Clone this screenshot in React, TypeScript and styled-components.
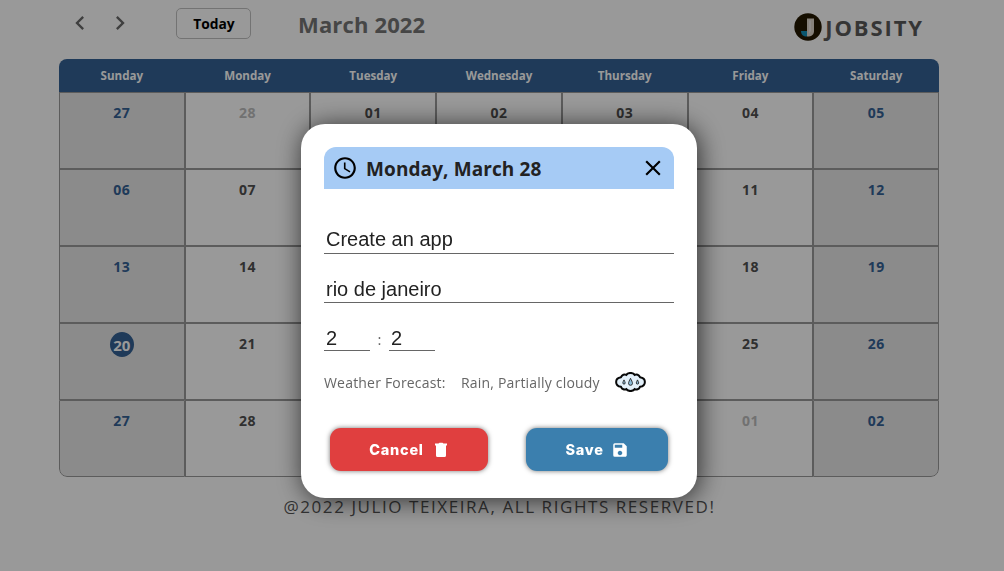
import React from "react";
import styled, { createGlobalStyle, css } from "styled-components";
import { MdAccessTime, MdChevronLeft, MdChevronRight, MdClose, MdSave } from "react-icons/md";

const GlobalStyle = createGlobalStyle`
  * { box-sizing: border-box; }
  body {
    margin: 0;
    background: #fff;
    color: #555;
    font-family: "Open Sans", "Noto Sans", sans-serif;
    overflow: hidden;
  }
  button, input { font-family: inherit; margin: 0; }
`;

const Page = styled.div`
  width: 1004px;
  height: 571px;
  padding: 0 65px 0 59px;
`;

const TopBar = styled.header`
  display: flex;
  align-items: center;
  height: 59px;
  padding: 0 16px 13px 8px;
`;

const NavButton = styled.button`
  display: flex;
  align-items: center;
  justify-content: center;
  width: 26px;
  height: 26px;
  margin-right: 14px;
  padding: 0;
  border: 0;
  background: none;
  color: #6a6a6a;
  font-size: 28px;
  svg { flex: none; }
`;

const TodayButton = styled.button`
  width: 75px;
  height: 31px;
  margin-left: 29px;
  padding: 0 0 0 1px;
  border: 1px solid #c0c0c0;
  border-radius: 5px;
  background: none;
  color: #000;
  font-size: 13.8px;
  font-weight: 700;
`;

const MonthTitle = styled.h1`
  margin: 1px 0 0 47px;
  color: #757575;
  font-size: 22px;
  line-height: 30px;
  font-weight: 700;
  letter-spacing: 0.15px;
  white-space: nowrap;
`;

const Brand = styled.div`
  display: flex;
  align-items: center;
  gap: 3px;
  margin: 8px -1px 0 auto;
  color: #595959;
  font-size: 22px;
  line-height: 30px;
  font-weight: 700;
  letter-spacing: 1.9px;
`;

const Calendar = styled.main`
  width: 880px;
`;

const Weekdays = styled.div`
  display: grid;
  grid-template-columns: repeat(7, 1fr);
  height: 33px;
  border-radius: 8px 8px 0 0;
  background: #346194;
  color: #fff;
  font-size: 11.6px;
  line-height: 33px;
  font-weight: 700;
  text-align: center;
`;

const Days = styled.div`
  display: grid;
  grid-template-columns: repeat(7, 1fr);
  grid-auto-rows: 77px;
  border-radius: 0 0 8px 8px;
  overflow: hidden;
`;

const Day = styled.div<{ $weekend: boolean; $corner?: "left" | "right" }>`
  display: flex;
  justify-content: center;
  align-items: flex-start;
  padding-top: 7px;
  border: 1px solid #999;
  background: ${(p) => (p.$weekend ? "#e8e8e8" : "#fff")};
  ${(p) => p.$corner && css`border-bottom-${p.$corner}-radius: 8px;`}
`;

const DayNumber = styled.span<{ $tone: string; $today: boolean }>`
  width: 24px;
  height: 25px;
  margin-top: ${(p) => (p.$today ? 1 : 0)}px;
  border-radius: 50%;
  background: ${(p) => (p.$today ? "#346194" : "transparent")};
  color: ${(p) => p.$tone};
  font-size: ${(p) => (p.$today ? 15 : 14)}px;
  line-height: ${(p) => (p.$today ? 26 : 25)}px;
  font-weight: 700;
  text-align: center;
  letter-spacing: ${(p) => (p.$today ? 0 : 0.5)}px;
`;

const Footer = styled.footer`
  margin-top: 17px;
  padding-left: 1px;
  color: #555;
  font-size: 17px;
  line-height: 26px;
  letter-spacing: 1.57px;
  text-align: center;
  white-space: nowrap;
`;

const Overlay = styled.div`
  position: fixed;
  inset: 0;
  padding: 124px 0 0 301px;
  background: rgba(0, 0, 0, 0.4);
`;

const Dialog = styled.section`
  width: 396px;
  height: 374px;
  padding: 23px;
  border-radius: 24px;
  background: #fff;
  box-shadow: 2px 2px 26px rgba(0, 0, 0, 0.72);
`;

const DialogHeader = styled.div`
  display: flex;
  align-items: center;
  height: 42px;
  padding: 0 8px;
  border-radius: 12px 12px 0 0;
  background: #a6cbf5;
  color: #000;
`;

const DialogTitle = styled.h2`
  flex: 1;
  margin: 2px 0 0 8px;
  color: #222;
  font-size: 19px;
  line-height: 28px;
  font-weight: 700;
  letter-spacing: 0.1px;
  white-space: nowrap;
`;

const CloseButton = styled.button`
  display: flex;
  padding: 0;
  border: 0;
  background: none;
  font-size: 26px;
  color: #000;
`;

const Field = styled.input<{ $width?: number; $gap?: number; $drop?: number }>`
  display: block;
  width: ${(p) => p.$width ?? 350}px;
  height: 29px;
  margin-top: ${(p) => p.$gap ?? 0}px;
  padding: ${(p) => p.$drop ?? 0}px 2px 0;
  border: 0;
  border-bottom: 1px solid #666;
  outline: 0;
  background: none;
  color: #222;
  font-family: "Liberation Sans", Arial, sans-serif;
  font-size: 20px;
`;

const TimeRow = styled.div`
  display: flex;
  align-items: flex-end;
  margin-top: 19px;
`;

const Colon = styled.span`
  width: 19px;
  padding-bottom: 1px;
  color: #666;
  font-size: 15px;
  line-height: 22px;
  text-align: center;
`;

const Forecast = styled.div`
  display: flex;
  align-items: center;
  height: 24px;
  margin-top: 19px;
  color: #666;
  font-size: 14px;
  white-space: nowrap;
`;

const ForecastText = styled.span<{ $width: number }>`
  width: ${(p) => p.$width}px;
  letter-spacing: 0.19px;
`;

const Actions = styled.div`
  display: flex;
  justify-content: space-between;
  margin-top: 34px;
  padding: 0 6px;
`;

const ActionButton = styled.button<{ $color: string; $width: number; $gap: number }>`
  display: flex;
  align-items: center;
  justify-content: center;
  gap: ${(p) => p.$gap}px;
  width: ${(p) => p.$width}px;
  height: 43px;
  padding: 0;
  border: 0;
  border-radius: 11px;
  background: ${(p) => p.$color};
  box-shadow: 0 0 5px rgba(0, 0, 0, 0.55);
  color: #fff;
  font-family: Inter, sans-serif;
  font-size: 14.5px;
  font-weight: 800;
  letter-spacing: 0.75px;
  svg { font-size: 18px; }
`;

const TrashIcon = () => (
  <svg width="16" height="18" viewBox="0 0 16 18" fill="currentColor">
    <path d="M2 2.500h3.500L6.500 1.800h3l1 .7H14v2H2zM3 4h10v10.500a1.500 1.500 0 0 1-1.500 1.500h-7A1.500 1.500 0 0 1 3 14.500z" />
  </svg>
);

const BrandMark = () => (
  <svg width="28" height="28" viewBox="0 0 28 28">
    <circle cx="14" cy="14" r="13.7" fill="#241800" />
    <path d="M7 18h6v5.500c-3 .3-6-1.500-6-5.500z" fill="#128fb8" />
    <path d="M13 5.500h7V18c0 3.500-2 5.500-7 5.500z" fill="#e2d9ce" />
    <path d="M15 7.500h2V18l-2 3z" fill="#fff" opacity=".45" />
  </svg>
);

const drop = (x: number, y: number, s: number) =>
  `M${x} ${y - 4 * s}C${x + s} ${y - 2 * s} ${x + 2 * s} ${y} ${x + 2 * s} ${y + s}A${2 * s} ${2 * s} 0 0 1 ${x - 2 * s} ${y + s}C${x - 2 * s} ${y} ${x - s} ${y - 2 * s} ${x} ${y - 4 * s}Z`;

const RainCloud = () => (
  <svg width="31" height="20" viewBox="0 0 31 20">
    <path
      d="M6 5.200C7 2.500 9.500 2 11.300 2.900 13 .3 18 .3 19.700 2.900 21.500 2 24 2.500 25 5.200 31.500 6 31.500 14 25 14.800 24 17.500 21.500 18 19.700 17.100 18 19.700 13 19.700 11.300 17.100 9.500 18 7 17.500 6 14.800-.5 14-.5 6 6 5.200Z"
      fill="#e3f0fa"
      stroke="#080808"
      strokeWidth="2"
    />
    <g fill="#8bbbd8" stroke="#222" strokeWidth="0.900">
      <path d={drop(9, 10.300, 0.6)} />
      <path d={drop(15.500, 10.300, 1)} />
      <path d={drop(22.500, 10.300, 0.6)} />
    </g>
  </svg>
);

const weekdays = ["Sunday", "Monday", "Tuesday", "Wednesday", "Thursday", "Friday", "Saturday"];

const days = [
  27, 28, 1, 2, 3, 4, 5,
  6, 7, 8, 9, 10, 11, 12,
  13, 14, 15, 16, 17, 18, 19,
  20, 21, 22, 23, 24, 25, 26,
  27, 28, 29, 30, 31, 1, 2,
];

const toneOf = (i: number) => {
  if (i === 21) return "#fff";
  if (i % 7 === 0 || i % 7 === 6) return "#346194";
  return i < 2 || i > 32 ? "#bdbdbd" : "#505050";
};

export default function App() {
  return (
    <>
      <GlobalStyle />
      <Page>
        <TopBar>
          <NavButton aria-label="Previous month"><MdChevronLeft /></NavButton>
          <NavButton aria-label="Next month"><MdChevronRight /></NavButton>
          <TodayButton>Today</TodayButton>
          <MonthTitle>March 2022</MonthTitle>
          <Brand><BrandMark />JOBSITY</Brand>
        </TopBar>
        <Calendar>
          <Weekdays>{weekdays.map((d) => <span key={d}>{d}</span>)}</Weekdays>
          <Days>
            {days.map((d, i) => (
              <Day
                key={i}
                $weekend={i % 7 === 0 || i % 7 === 6}
                $corner={i === 28 ? "left" : i === 34 ? "right" : undefined}
              >
                <DayNumber $tone={toneOf(i)} $today={i === 21}>{String(d).padStart(2, "0")}</DayNumber>
              </Day>
            ))}
          </Days>
        </Calendar>
        <Footer>@2022 JULIO TEIXEIRA, ALL RIGHTS RESERVED!</Footer>
      </Page>
      <Overlay>
        <Dialog role="dialog">
          <DialogHeader>
            <MdAccessTime size={26} />
            <DialogTitle>Monday, March 28</DialogTitle>
            <CloseButton aria-label="Close"><MdClose /></CloseButton>
          </DialogHeader>
          <Field $gap={36} defaultValue="Create an app" />
          <Field $gap={20} $drop={2} defaultValue="rio de janeiro" />
          <TimeRow>
            <Field $width={46} $drop={4} defaultValue="2" />
            <Colon>:</Colon>
            <Field $width={46} $drop={4} defaultValue="2" />
          </TimeRow>
          <Forecast>
            <ForecastText $width={137}>Weather Forecast:</ForecastText>
            <ForecastText $width={154}>Rain, Partially cloudy</ForecastText>
            <RainCloud />
          </Forecast>
          <Actions>
            <ActionButton $color="#e03f3f" $width={158} $gap={9}>Cancel <TrashIcon /></ActionButton>
            <ActionButton $color="#3b7fae" $width={142} $gap={7}>Save <MdSave /></ActionButton>
          </Actions>
        </Dialog>
      </Overlay>
    </>
  );
}
